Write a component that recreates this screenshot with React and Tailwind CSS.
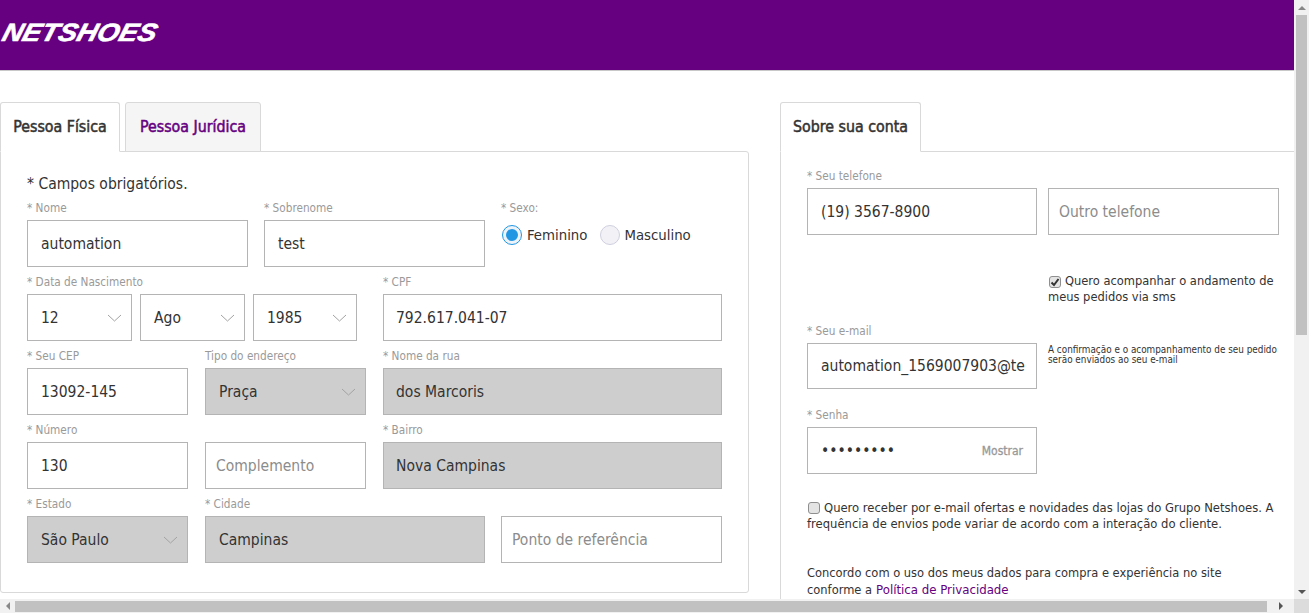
import React from "react";

const FONT = "font-['DejaVu_Sans_Condensed','DejaVu_Sans',sans-serif] [font-stretch:condensed]";

function Chevron() {
  return (
    <svg width="15" height="8" viewBox="0 0 15 8" fill="none" className="shrink-0">
      <path d="M1 1l6.5 6L14 1" stroke="#a3a3a3" strokeWidth="1" />
    </svg>
  );
}

function Label({ children }) {
  return <div className="h-[13px] mb-[5px] text-[11.7px] leading-[13px] text-[#9a9a9a] whitespace-nowrap">{children}</div>;
}

function Box({ value, placeholder, disabled, select, h = "h-[47px]", pad = "pl-[13px]", right = "pr-[9px]" }) {
  return (
    <div className={`${h} ${pad} ${right} flex items-center justify-between border border-[#b4b4b4] overflow-hidden text-[15.5px] whitespace-nowrap ${disabled ? "bg-[#cecece]" : "bg-white"} ${placeholder ? "text-[#8c8c8c]" : "text-[#333]"}`}>
      <span className="pt-[2px]">{value || placeholder}</span>
      {select ? <Chevron /> : null}
    </div>
  );
}

function Field({ w, label, ...rest }) {
  return (
    <div className={`${w} shrink-0`}>
      <Label>{label}</Label>
      <Box {...rest} />
    </div>
  );
}

function Check({ checked }) {
  return (
    <span className="inline-flex align-[-2px] items-center justify-center w-[12px] h-[12px] rounded-[3px] border border-[#8f8f8f] bg-[#e4e4e4] mr-[4px] ml-[1px]">
      {checked ? (
        <svg width="10" height="10" viewBox="0 0 10 10" fill="none">
          <path d="M1.5 5.5L4 8l4.5-6" stroke="#333" strokeWidth="2" />
        </svg>
      ) : null}
    </span>
  );
}

function Tab({ active, children, w }) {
  return (
    <div className={`${w} h-[50px] -mb-px flex items-center justify-center rounded-t-[3px] border border-[#d9d9d9] text-[15.8px] [-webkit-text-stroke:0.5px] whitespace-nowrap ${active ? "bg-white border-b-white text-[#333]" : "bg-[#f5f5f5] text-[#660080]"}`}>
      {children}
    </div>
  );
}

function LeftPanel() {
  return (
    <div className="w-[749px] shrink-0">
      <div className="flex gap-[5px] relative z-10">
        <Tab active w="w-[120px]">Pessoa Física</Tab>
        <Tab w="w-[136px]">Pessoa Jurídica</Tab>
      </div>
      <div className="h-[442px] border border-[#d9d9d9] rounded-b-[3px] rounded-tr-[3px] pl-[26px] pt-[22px]">
        <div className="h-[20px] mb-[8px] text-[15.5px] leading-[20px] text-[#333]">* Campos obrigatórios.</div>
        <div className="flex flex-col gap-[9px]">
          <div className="flex gap-[16px]">
            <Field w="w-[221px]" label="* Nome" value="automation" />
            <Field w="w-[221px]" label="* Sobrenome" value="test" />
            <div className="w-[221px]">
              <Label>* Sexo:</Label>
              <div className="flex items-center h-[30px] text-[14.8px] text-[#333] pl-px">
                <span className="w-[20px] h-[20px] rounded-full border border-[#2196e3] bg-[#eef3fa] flex items-center justify-center">
                  <span className="w-[12px] h-[12px] rounded-full bg-[#2196e3]" />
                </span>
                <span className="ml-[5px]">Feminino</span>
                <span className="ml-[13px] w-[20px] h-[20px] rounded-full border border-[#cfcfe0] bg-[#f2f2f6]" />
                <span className="ml-[4px]">Masculino</span>
              </div>
            </div>
          </div>
          <div className="flex">
            <div className="w-[356px] shrink-0">
              <Label>* Data de Nascimento</Label>
              <div className="flex gap-[8px] w-[330px]">
                <div className="w-[105px]"><Box value="12" select /></div>
                <div className="w-[105px]"><Box value="Ago" select /></div>
                <div className="w-[104px]"><Box value="1985" select /></div>
              </div>
            </div>
            <Field w="w-[339px]" label="* CPF" value="792.617.041-07" pad="pl-[12px]" />
          </div>
          <div className="flex gap-[17px]">
            <Field w="w-[161px]" label="* Seu CEP" value="13092-145" />
            <Field w="w-[161px]" label="Tipo do endereço" value="Praça" disabled select />
            <Field w="w-[339px]" label="* Nome da rua" value="dos Marcoris" disabled pad="pl-[12px]" />
          </div>
          <div className="flex gap-[17px]">
            <Field w="w-[161px]" label="* Número" value="130" />
            <Field w="w-[161px]" label="&nbsp;" placeholder="Complemento" pad="pl-[10px]" />
            <Field w="w-[339px]" label="* Bairro" value="Nova Campinas" disabled pad="pl-[12px]" />
          </div>
          <div className="flex">
            <Field w="w-[161px] mr-[17px]" label="* Estado" value="São Paulo" disabled select />
            <Field w="w-[280px] mr-[16px]" label="* Cidade" value="Campinas" disabled />
            <Field w="w-[221px]" label="&nbsp;" placeholder="Ponto de referência" pad="pl-[10px]" />
          </div>
        </div>
      </div>
    </div>
  );
}

function RightPanel() {
  return (
    <div className="w-[514px] shrink-0">
      <div className="flex relative z-10">
        <Tab active w="w-[141px]">Sobre sua conta</Tab>
      </div>
      <div className="border-t border-l border-[#d9d9d9] pl-[26px] pt-[18px] h-[460px]">
        <div className="flex gap-[11px]">
          <Field w="w-[230px]" label="* Seu telefone" value="(19) 3567-8900" />
          <Field w="w-[231px]" label="&nbsp;" placeholder="Outro telefone" pad="pl-[10px]" />
        </div>
        <div className="ml-[241px] mt-[38px] w-[231px] text-[12.75px] leading-[16px] text-[#333]">
          <Check checked />Quero acompanhar o andamento de meus pedidos via sms
        </div>
        <div className="flex gap-[11px] mt-[20px]">
          <Field w="w-[230px]" label="* Seu e-mail" value="automation_1569007903@te" h="h-[46px]" />
          <div className="w-[231px] pt-[20px] text-[9.85px] leading-[10px] text-[#333]">
            A confirmação e o acompanhamento de seu pedido serão enviados ao seu e-mail
          </div>
        </div>
        <div className="w-[230px] mt-[20px]">
          <Label>* Senha</Label>
          <div className="relative">
            <Box value="•••••••••" />
            <span className="absolute right-[14px] top-[15px] text-[12px] [-webkit-text-stroke:0.3px] text-[#999]">Mostrar</span>
          </div>
        </div>
        <div className="mt-[26px] w-[472px] text-[12.9px] leading-[16px] text-[#333]">
          <Check />Quero receber por e-mail ofertas e novidades das lojas do Grupo Netshoes. A frequência de envios pode variar de acordo com a interação do cliente.
        </div>
        <div className="mt-[32px] w-[472px] text-[12.75px] leading-[17px] text-[#333]">
          <div>Concordo com o uso dos meus dados para compra e experiência no site</div>
          <div className="flex gap-[4px]">
            <span>conforme a</span>
            <span className="text-[13.1px] text-[#660080]">Política de Privacidade</span>
          </div>
        </div>
      </div>
    </div>
  );
}

function VScroll() {
  return (
    <div className="w-[15px] shrink-0 bg-[#f1f1f1] flex flex-col items-center">
      <div className="h-[15px] flex items-center justify-center">
        <span className="w-0 h-0 border-x-[4px] border-x-transparent border-b-[4px] border-b-[#888]" />
      </div>
      <div className="w-[11px] h-[320px] bg-[#c1c1c1]" />
      <div className="flex-1" />
      <div className="h-[15px] flex items-center justify-center">
        <span className="w-0 h-0 border-x-[4px] border-x-transparent border-t-[4px] border-t-[#555]" />
      </div>
    </div>
  );
}

function HScroll() {
  return (
    <div className="h-[14px] shrink-0 flex bg-[#f1f1f1] items-center">
      <div className="w-[15px] flex items-center justify-center">
        <span className="w-0 h-0 border-y-[4px] border-y-transparent border-r-[4px] border-r-[#888]" />
      </div>
      <div className="w-[1252px] h-[11px] bg-[#c1c1c1]" />
      <div className="flex-1 flex items-center justify-center">
        <span className="w-0 h-0 border-y-[4px] border-y-transparent border-l-[4px] border-l-[#555]" />
      </div>
      <div className="w-[15px] h-full bg-[#dcdcdc]" />
    </div>
  );
}

export default function App() {
  return (
    <div className={`w-[1309px] h-[613px] overflow-hidden flex flex-col bg-white ${FONT}`}>
      <div className="flex-1 min-h-0 flex">
        <div className="flex-1 min-w-0 overflow-hidden">
          <div className="h-[71px] bg-[#660080] border-b border-[#c8c8c8] flex items-center">
            <span className="font-['Liberation_Sans',sans-serif] [font-stretch:normal] origin-left -skew-x-[14deg] scale-x-[1.12] ml-[3px] -mt-[5px] text-[25px] leading-none font-bold italic [-webkit-text-stroke:0.6px_white] text-white">NETSHOES</span>
          </div>
          <div className="flex gap-[31px] pt-[31px]">
            <LeftPanel />
            <RightPanel />
          </div>
        </div>
        <VScroll />
      </div>
      <HScroll />
    </div>
  );
}
